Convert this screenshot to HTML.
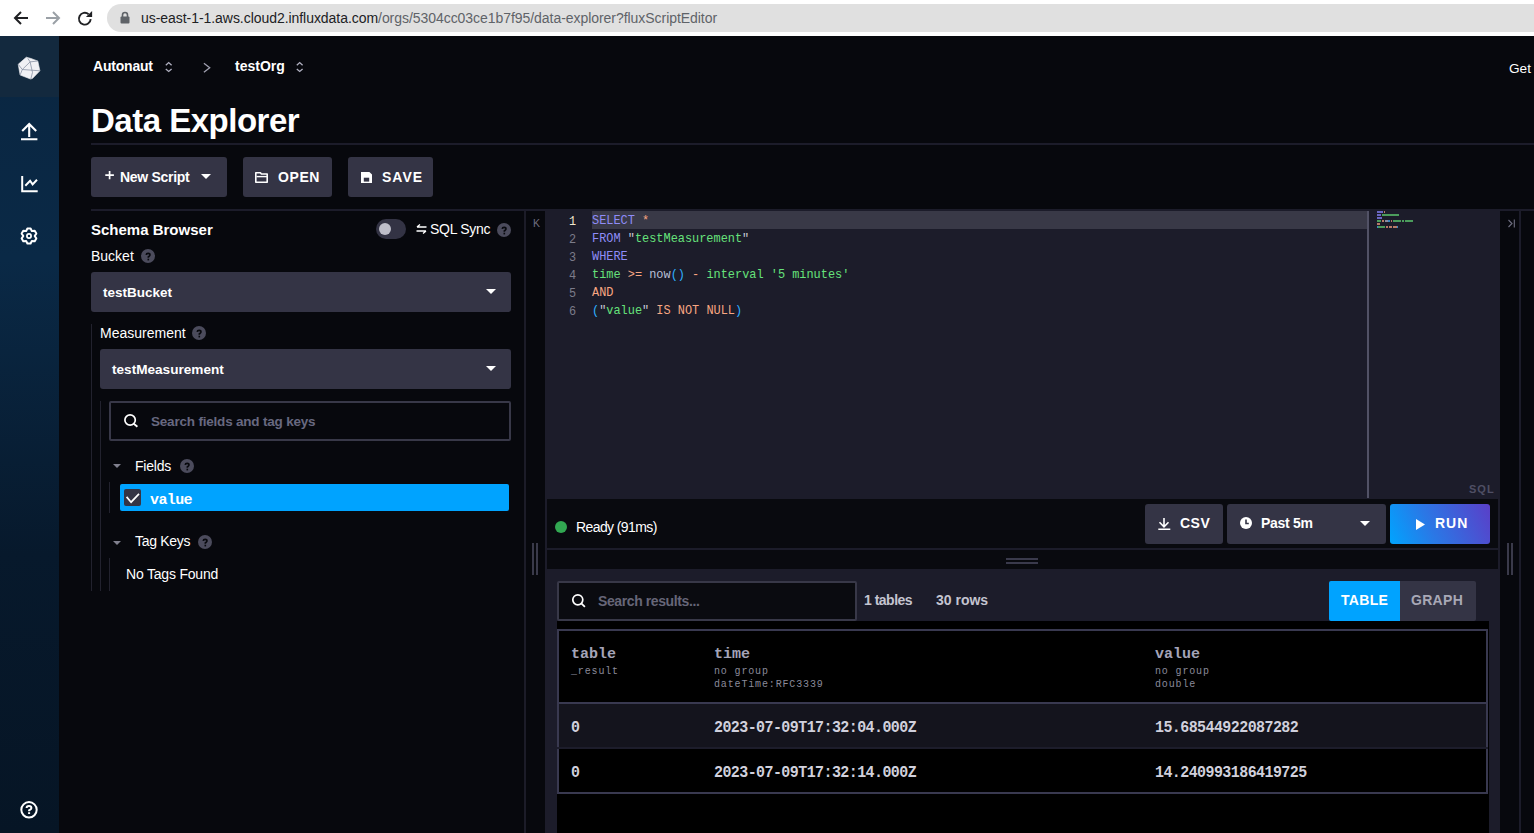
<!DOCTYPE html>
<html><head><meta charset="utf-8">
<style>
*{margin:0;padding:0;box-sizing:border-box}
html,body{width:1534px;height:833px;overflow:hidden;background:#07080d;font-family:"Liberation Sans",sans-serif;color:#fff}
.a{position:absolute;white-space:nowrap}
.mono{font-family:"Liberation Mono",monospace}
.btn{position:absolute;background:#343445;border-radius:3px}
.q{position:absolute;width:14px;height:14px;border-radius:50%;background:#4b4b5c;color:#07080d;font-size:10px;font-weight:bold;text-align:center;line-height:15px}
svg{position:absolute;overflow:visible}
.code{position:absolute;left:592px;font-family:"Liberation Mono",monospace;font-size:11.92px;white-space:pre;line-height:18px;padding-top:1px}
.ln{position:absolute;left:545px;width:31px;text-align:right;font-family:"Liberation Mono",monospace;font-size:11.85px;line-height:18px;color:#7c7c8a;padding-top:2px}
.kw{color:#8f8cf8}.st{color:#66e27b}.op{color:#f8a682}.fn{color:#b9bfd6}.pa{color:#2fb0ff}.wh{color:#c9c9d6}
</style></head><body>
<!-- browser bar -->
<div class="a" style="left:0;top:0;width:1534px;height:36px;background:#fff"></div>
<div class="a" style="left:107px;top:4px;width:1440px;height:28px;background:#e0e0e0;border-radius:14px"></div>
<svg style="left:13px;top:10px" width="16" height="16" viewBox="0 0 16 16"><path d="M15 8H2M8 2L2 8l6 6" stroke="#202124" stroke-width="2" fill="none"/></svg>
<svg style="left:45px;top:10px" width="16" height="16" viewBox="0 0 16 16"><path d="M1 8h13M8 2l6 6-6 6" stroke="#9aa0a6" stroke-width="2" fill="none"/></svg>
<svg style="left:77px;top:10px" width="16" height="16" viewBox="0 0 16 16"><path d="M13.7 9.2A5.9 5.9 0 1 1 11.6 4.2" stroke="#202124" stroke-width="1.9" fill="none"/><path d="M8.9 7.1L15.1 1.1V7.1z" fill="#202124"/></svg>
<svg style="left:120px;top:11px" width="10" height="13" viewBox="0 0 10 13"><rect x="0.5" y="5.5" width="9" height="7" rx="1" fill="#5f6368"/><path d="M2.5 6V4a2.5 2.5 0 0 1 5 0v2" stroke="#5f6368" stroke-width="1.6" fill="none"/></svg>
<div class="a" style="left:141px;top:10px;font-size:14px;letter-spacing:-0.05px;color:#202124">us-east-1-1.aws.cloud2.influxdata.com<span style="color:#5f6368">/orgs/5304cc03ce1b7f95/data-explorer?fluxScriptEditor</span></div>

<!-- sidebar -->
<div class="a" style="left:0;top:36px;width:59px;height:797px;background:linear-gradient(#0a2641 0%,#0a2946 28%,#07192c 65%,#061525 100%)"></div>
<div class="a" style="left:0;top:36px;width:59px;height:61px;background:#13293e"></div>
<svg style="left:14px;top:52px" width="30" height="32" viewBox="0 0 30 32"><path d="M4.2 12.3L12.3 5.2 16 6.2 23.8 9 25.9 18.8 18.4 26.5 16.5 27 6.1 23z" fill="#f0f0f4" stroke="#f0f0f4" stroke-width="0.6" stroke-linejoin="round"/><path d="M4.2 12.3L8.3 17.5 16.1 9.9 13.8 6.3M16.1 9.9L23.8 9M8.3 17.5L6.1 23M8.3 17.5L25.9 18.8M16.1 9.9L18.5 20.4 16.8 27" stroke="#7a8498" stroke-width="0.7" fill="none"/></svg>
<svg style="left:21px;top:123px" width="17" height="18" viewBox="0 0 17 18"><path d="M8.2 14V1.5M1.2 8l7-7 7 7M0 16.3h16.4" stroke="#fff" stroke-width="2.1" fill="none"/></svg>
<svg style="left:21px;top:176px" width="17" height="17" viewBox="0 0 17 17"><path d="M1.2 0v15.2h15.5M4.3 9.8l4.8-5 2.5 3.6 4.4-4.7" stroke="#fff" stroke-width="2" fill="none"/></svg>
<svg style="left:20px;top:227px" width="18" height="18" viewBox="0 0 18 18"><path d="M7.40 1.47 L10.60 1.47 L11.85 4.06 L14.72 3.85 L16.32 6.62 L14.70 9.00 L16.32 11.38 L14.72 14.15 L11.85 13.94 L10.60 16.53 L7.40 16.53 L6.15 13.94 L3.28 14.15 L1.68 11.38 L3.30 9.00 L1.68 6.62 L3.28 3.85 L6.15 4.06Z" stroke="#fff" stroke-width="2" fill="none" stroke-linejoin="round"/><circle cx="9" cy="9" r="2.1" stroke="#fff" stroke-width="1.7" fill="none"/></svg>
<svg style="left:20px;top:801px" width="18" height="18" viewBox="0 0 18 18"><circle cx="9" cy="8.8" r="7.7" stroke="#fff" stroke-width="2" fill="none"/><path d="M6.6 7.1C6.6 5.6 7.6 4.9 9 4.9 10.5 4.9 11.4 5.8 11.4 7 11.4 8.3 10.1 8.6 9.1 9.3V10.2" stroke="#fff" stroke-width="2" fill="none"/><rect x="8.1" y="11.2" width="2" height="1.8" fill="#fff"/></svg>

<!-- header -->
<div class="a" style="left:93px;top:58px;font-size:14px;font-weight:bold;letter-spacing:-0.2px">Autonaut</div>
<svg style="left:165px;top:61px" width="8" height="12" viewBox="0 0 8 12"><path d="M0.8 4.3l2.9-2.7 2.9 2.7M0.8 7.9l2.9 2.6 2.9-2.6" stroke="#b0b0c0" stroke-width="1.3" fill="none"/></svg>
<svg style="left:203px;top:62px" width="8" height="11" viewBox="0 0 8 11"><path d="M0.9 1.2l5.8 4.5-5.8 4.5" stroke="#a0a0b0" stroke-width="1.3" fill="none"/></svg>
<div class="a" style="left:235px;top:58px;font-size:14px;font-weight:bold">testOrg</div>
<svg style="left:296px;top:61px" width="8" height="12" viewBox="0 0 8 12"><path d="M0.8 4.3l2.9-2.7 2.9 2.7M0.8 7.9l2.9 2.6 2.9-2.6" stroke="#b0b0c0" stroke-width="1.3" fill="none"/></svg>
<div class="a" style="left:1509px;top:60.5px;font-size:13.6px">Get</div>
<div class="a" style="left:91px;top:102px;font-size:33px;font-weight:bold;letter-spacing:-0.5px">Data Explorer</div>
<div class="a" style="left:91px;top:143px;width:1443px;height:2px;background:#1c1c2a"></div>

<div class="btn" style="left:91px;top:157px;width:136px;height:40px"></div>
<div class="btn" style="left:243px;top:157px;width:89px;height:40px"></div>
<div class="btn" style="left:348px;top:157px;width:85px;height:40px"></div>
<svg style="left:105px;top:171px" width="9" height="9" viewBox="0 0 9 9"><path d="M4.6 0v8.2M0.3 4.1h8.6" stroke="#fff" stroke-width="1.7"/></svg>
<div class="a" style="left:120px;top:169px;font-size:14px;font-weight:bold;letter-spacing:-0.3px">New Script</div>
<svg style="left:201px;top:174px" width="10" height="5" viewBox="0 0 10 5"><path d="M0 0h10L5 5z" fill="#fff"/></svg>
<svg style="left:255px;top:172px" width="13" height="11" viewBox="0 0 13 11"><path d="M0.8 0.8h4.6l1 1.2h5.8v8.2H0.8z" stroke="#fff" stroke-width="1.6" fill="none" stroke-linejoin="round"/><path d="M1.5 4.6h11" stroke="#fff" stroke-width="1.4"/></svg>
<div class="a" style="left:278px;top:169px;font-size:14px;font-weight:bold;letter-spacing:0.6px">OPEN</div>
<svg style="left:361px;top:172px" width="11" height="11" viewBox="0 0 11 11"><path d="M0 0h8.4l2.6 2.6v8.4H0z" fill="#fff"/><rect x="2.8" y="5.7" width="5.4" height="3.9" fill="#343445"/></svg>
<div class="a" style="left:382px;top:169px;font-size:14px;font-weight:bold;letter-spacing:1px">SAVE</div>

<div class="a" style="left:91px;top:209px;width:1443px;height:2px;background:#1c1c2a"></div>

<!-- schema browser -->
<div class="a" style="left:91px;top:221px;font-size:15px;font-weight:bold">Schema Browser</div>
<div class="a" style="left:376px;top:219px;width:30px;height:20px;border-radius:10px;background:#333344"></div>
<div class="a" style="left:379px;top:223px;width:12px;height:12px;border-radius:50%;background:#bebec9"></div>
<svg style="left:416px;top:224px" width="11" height="10" viewBox="0 0 11 10"><path d="M10.5 3H1M4 0.5L1 3M0.5 7H10M7 9.5L10 7" stroke="#fff" stroke-width="1.4" fill="none"/></svg>
<div class="a" style="left:430px;top:221px;font-size:14px;letter-spacing:-0.3px">SQL Sync</div>
<svg style="left:497px;top:223px" width="14" height="14" viewBox="0 0 14 14"><circle cx="7" cy="7" r="7" fill="#4b4b5c"/><path d="M5.2 5.9C5.3 4.9 6 4.4 7.1 4.4 8.2 4.4 9 5.1 9 6 9 7 8 7.3 7.3 7.9V8.8" stroke="#07080d" stroke-width="1.6" fill="none"/><rect x="6.5" y="9.7" width="1.6" height="1.7" fill="#07080d"/></svg>
<div class="a" style="left:91px;top:248px;font-size:14px">Bucket</div>
<svg style="left:141px;top:249px" width="14" height="14" viewBox="0 0 14 14"><circle cx="7" cy="7" r="7" fill="#4b4b5c"/><path d="M5.2 5.9C5.3 4.9 6 4.4 7.1 4.4 8.2 4.4 9 5.1 9 6 9 7 8 7.3 7.3 7.9V8.8" stroke="#07080d" stroke-width="1.6" fill="none"/><rect x="6.5" y="9.7" width="1.6" height="1.7" fill="#07080d"/></svg>
<div class="btn" style="left:91px;top:272px;width:420px;height:40px"></div>
<div class="a" style="left:103px;top:285px;font-size:13.5px;font-weight:bold">testBucket</div>
<svg style="left:486px;top:289px" width="10" height="5" viewBox="0 0 10 5"><path d="M0 0h10L5 5z" fill="#fff"/></svg>
<div class="a" style="left:91px;top:324px;width:1px;height:267px;background:#22222e"></div>
<div class="a" style="left:100px;top:325px;font-size:14px">Measurement</div>
<svg style="left:192px;top:326px" width="14" height="14" viewBox="0 0 14 14"><circle cx="7" cy="7" r="7" fill="#4b4b5c"/><path d="M5.2 5.9C5.3 4.9 6 4.4 7.1 4.4 8.2 4.4 9 5.1 9 6 9 7 8 7.3 7.3 7.9V8.8" stroke="#07080d" stroke-width="1.6" fill="none"/><rect x="6.5" y="9.7" width="1.6" height="1.7" fill="#07080d"/></svg>
<div class="btn" style="left:100px;top:349px;width:411px;height:40px"></div>
<div class="a" style="left:112px;top:362px;font-size:13.6px;font-weight:bold">testMeasurement</div>
<svg style="left:486px;top:366px" width="10" height="5" viewBox="0 0 10 5"><path d="M0 0h10L5 5z" fill="#fff"/></svg>
<div class="a" style="left:100px;top:401px;width:1px;height:190px;background:#22222e"></div>
<div class="a" style="left:109px;top:401px;width:402px;height:40px;border:2px solid #383848;border-radius:2px;background:#07080d"></div>
<svg style="left:124px;top:414px" width="15" height="15" viewBox="0 0 15 15"><circle cx="6.1" cy="6" r="5.2" stroke="#fff" stroke-width="1.7" fill="none"/><path d="M9.8 9.7L13.4 12.8" stroke="#fff" stroke-width="1.8"/></svg>
<div class="a" style="left:151px;top:414px;font-size:13.5px;font-weight:bold;letter-spacing:-0.2px;color:#686880">Search fields and tag keys</div>
<svg style="left:113px;top:464px" width="8" height="4" viewBox="0 0 8 4"><path d="M0 0h8L4 4z" fill="#80808e"/></svg>
<div class="a" style="left:135px;top:458px;font-size:14px;letter-spacing:-0.2px">Fields</div>
<svg style="left:180px;top:459px" width="14" height="14" viewBox="0 0 14 14"><circle cx="7" cy="7" r="7" fill="#4b4b5c"/><path d="M5.2 5.9C5.3 4.9 6 4.4 7.1 4.4 8.2 4.4 9 5.1 9 6 9 7 8 7.3 7.3 7.9V8.8" stroke="#07080d" stroke-width="1.6" fill="none"/><rect x="6.5" y="9.7" width="1.6" height="1.7" fill="#07080d"/></svg>
<div class="a" style="left:109px;top:482px;width:1px;height:31px;background:#22222e"></div>
<div class="a" style="left:120px;top:484px;width:389px;height:27px;border-radius:2px;background:#00a3ff"></div>
<div class="a" style="left:124px;top:489px;width:17px;height:17px;border-radius:2px;background:#353545"></div>
<svg style="left:124px;top:489px" width="17" height="17" viewBox="0 0 17 17"><path d="M2.6 7.9l4.5 5.3 7.9-8.3" stroke="#fff" stroke-width="1.7" fill="none"/></svg>
<div class="a mono" style="left:150px;top:492px;font-size:15px;letter-spacing:-0.6px;font-weight:bold">value</div>
<svg style="left:113px;top:541px" width="8" height="4" viewBox="0 0 8 4"><path d="M0 0h8L4 4z" fill="#80808e"/></svg>
<div class="a" style="left:135px;top:533px;font-size:14px;letter-spacing:-0.3px">Tag Keys</div>
<svg style="left:198px;top:535px" width="14" height="14" viewBox="0 0 14 14"><circle cx="7" cy="7" r="7" fill="#4b4b5c"/><path d="M5.2 5.9C5.3 4.9 6 4.4 7.1 4.4 8.2 4.4 9 5.1 9 6 9 7 8 7.3 7.3 7.9V8.8" stroke="#07080d" stroke-width="1.6" fill="none"/><rect x="6.5" y="9.7" width="1.6" height="1.7" fill="#07080d"/></svg>
<div class="a" style="left:109px;top:558px;width:1px;height:33px;background:#22222e"></div>
<div class="a" style="left:126px;top:566px;font-size:14px;letter-spacing:-0.2px">No Tags Found</div>

<div class="a" style="left:524px;top:211px;width:2px;height:622px;background:#1c1c28"></div>
<div class="a" style="left:532px;top:543px;width:2px;height:32px;background:#3a3a4a"></div>
<div class="a" style="left:536px;top:543px;width:2px;height:32px;background:#3a3a4a"></div>
<div class="a" style="left:533px;top:217px;font-size:10.5px;color:#6e6e80">K</div>

<!-- editor -->
<div class="a" style="left:545px;top:211px;width:955px;height:622px;background:#1c1c2a"></div>
<div class="a" style="left:592px;top:211px;width:776px;height:18px;background:#393947"></div>
<div class="a" style="left:1367px;top:211px;width:2px;height:287px;background:#525266"></div>
<div class="ln" style="top:211px;color:#f0e6cc">1</div>
<div class="ln" style="top:229px">2</div>
<div class="ln" style="top:247px">3</div>
<div class="ln" style="top:265px">4</div>
<div class="ln" style="top:283px">5</div>
<div class="ln" style="top:301px">6</div>
<div class="code" style="top:211px"><span class="kw">SELECT</span> <span class="op">*</span></div>
<div class="code" style="top:229px"><span class="kw">FROM</span> <span class="wh">"</span><span class="st">testMeasurement</span><span class="wh">"</span></div>
<div class="code" style="top:247px"><span class="kw">WHERE</span></div>
<div class="code" style="top:265px"><span class="st">time</span> <span class="op">&gt;=</span> <span class="fn">now</span><span class="pa">()</span> <span class="op">-</span> <span class="st">interval</span> <span class="st">'5 minutes'</span></div>
<div class="code" style="top:283px"><span class="op">AND</span></div>
<div class="code" style="top:301px"><span class="pa">(</span><span class="wh">"</span><span class="st">value</span><span class="wh">"</span> <span class="op">IS</span> <span class="op">NOT</span> <span class="op">NULL</span><span class="pa">)</span></div>
<div class="a" style="left:1377px;top:211px;width:6px;height:2px;background:#6a67c4"></div>
<div class="a" style="left:1384px;top:211px;width:1px;height:2px;background:#b87a68"></div>
<div class="a" style="left:1377px;top:214px;width:4px;height:2px;background:#6a67c4"></div>
<div class="a" style="left:1382px;top:214px;width:17px;height:2px;background:#4b9c5c"></div>
<div class="a" style="left:1377px;top:217px;width:5px;height:2px;background:#6a67c4"></div>
<div class="a" style="left:1377px;top:220px;width:4px;height:2px;background:#4b9c5c"></div>
<div class="a" style="left:1382px;top:220px;width:2px;height:2px;background:#b87a68"></div>
<div class="a" style="left:1385px;top:220px;width:3px;height:2px;background:#8a8ca0"></div>
<div class="a" style="left:1388px;top:220px;width:2px;height:2px;background:#3a86c0"></div>
<div class="a" style="left:1391px;top:220px;width:1px;height:2px;background:#b87a68"></div>
<div class="a" style="left:1393px;top:220px;width:8px;height:2px;background:#4b9c5c"></div>
<div class="a" style="left:1402px;top:220px;width:2px;height:2px;background:#4b9c5c"></div>
<div class="a" style="left:1405px;top:220px;width:8px;height:2px;background:#4b9c5c"></div>
<div class="a" style="left:1377px;top:223px;width:3px;height:2px;background:#b87a68"></div>
<div class="a" style="left:1377px;top:226px;width:1px;height:2px;background:#3a86c0"></div>
<div class="a" style="left:1378px;top:226px;width:7px;height:2px;background:#4b9c5c"></div>
<div class="a" style="left:1386px;top:226px;width:2px;height:2px;background:#b87a68"></div>
<div class="a" style="left:1389px;top:226px;width:3px;height:2px;background:#b87a68"></div>
<div class="a" style="left:1393px;top:226px;width:4px;height:2px;background:#b87a68"></div>
<div class="a" style="left:1397px;top:226px;width:1px;height:2px;background:#3a86c0"></div>
<div class="a" style="left:1469px;top:483px;font-size:11px;font-weight:bold;color:#4f4f64;letter-spacing:1px">SQL</div>
<!-- right collapse column -->
<div class="a" style="left:1500px;top:211px;width:20px;height:622px;background:#07080d"></div>
<div class="a" style="left:1519px;top:211px;width:2px;height:622px;background:#1c1c2a"></div>
<svg style="left:1508px;top:219px" width="7" height="9" viewBox="0 0 7 9"><path d="M0.5 1l3.5 3.5-3.5 3.5M6.3 0.5v8" stroke="#6e6e80" stroke-width="1.1" fill="none"/></svg>
<div class="a" style="left:1507px;top:543px;width:2px;height:32px;background:#3a3a4a"></div>
<div class="a" style="left:1511px;top:543px;width:2px;height:32px;background:#3a3a4a"></div>

<!-- status bar -->
<div class="a" style="left:547px;top:499px;width:951px;height:49px;background:#090a0f"></div>
<div class="a" style="left:547px;top:550px;width:951px;height:19px;background:#090a0f"></div>
<div class="a" style="left:1006px;top:558px;width:32px;height:2px;background:#3a3a4c"></div>
<div class="a" style="left:1006px;top:562px;width:32px;height:2px;background:#3a3a4c"></div>
<div class="a" style="left:555px;top:521px;width:12px;height:12px;border-radius:50%;background:#32a852"></div>
<div class="a" style="left:576px;top:519px;font-size:14px;letter-spacing:-0.6px">Ready (91ms)</div>
<div class="btn" style="left:1145px;top:504px;width:78px;height:40px"></div>
<svg style="left:1158px;top:517px" width="13" height="14" viewBox="0 0 13 14"><path d="M6 1v9M1.5 5.3l4.5 4.5 4.5-4.5M0.3 12.2h12" stroke="#fff" stroke-width="1.6" fill="none"/></svg>
<div class="a" style="left:1180px;top:515px;font-size:14px;font-weight:bold;letter-spacing:0.5px">CSV</div>
<div class="btn" style="left:1227px;top:504px;width:159px;height:40px"></div>
<svg style="left:1240px;top:517px" width="12" height="12" viewBox="0 0 12 12"><circle cx="6" cy="6" r="6" fill="#fff"/><path d="M6 2.5V6.5H8.8" stroke="#343445" stroke-width="1.6" fill="none"/></svg>
<div class="a" style="left:1261px;top:515px;font-size:14px;font-weight:bold;letter-spacing:-0.3px">Past 5m</div>
<svg style="left:1360px;top:521px" width="10" height="5" viewBox="0 0 10 5"><path d="M0 0h10L5 5z" fill="#fff"/></svg>
<div class="a" style="left:1390px;top:504px;width:100px;height:40px;border-radius:3px;background:linear-gradient(66deg,#00a4ff 0%,#2a78e6 40%,#5a3fc8 100%)"></div>
<svg style="left:1416px;top:518.5px" width="9" height="11" viewBox="0 0 9 11"><path d="M0 0l9 5.5L0 11z" fill="#fff"/></svg>
<div class="a" style="left:1435px;top:515px;font-size:14px;font-weight:bold;letter-spacing:1px">RUN</div>

<!-- results -->
<div class="a" style="left:557px;top:581px;width:300px;height:40px;border:2px solid #383848;border-radius:2px;background:#0a0b10"></div>
<svg style="left:572px;top:594px" width="15" height="15" viewBox="0 0 15 15"><circle cx="5.8" cy="5.8" r="5" stroke="#fff" stroke-width="1.7" fill="none"/><path d="M9.3 9.3L12.9 12.8" stroke="#fff" stroke-width="1.8"/></svg>
<div class="a" style="left:598px;top:593px;font-size:14px;font-weight:bold;letter-spacing:-0.4px;color:#666678">Search results...</div>
<div class="a" style="left:864px;top:592px;font-size:14px;font-weight:bold;letter-spacing:-0.5px;color:#c4c4d0">1 tables</div>
<div class="a" style="left:936px;top:592px;font-size:14px;font-weight:bold;color:#c4c4d0">30 rows</div>
<div class="a" style="left:1329px;top:581px;width:71px;height:40px;background:#00a3ff;border-radius:2px 0 0 2px"></div>
<div class="a" style="left:1400px;top:581px;width:76px;height:40px;background:#343445;border-radius:0 2px 2px 0"></div>
<div class="a" style="left:1341px;top:592px;font-size:14px;font-weight:bold;letter-spacing:0.3px">TABLE</div>
<div class="a" style="left:1411px;top:592px;font-size:14px;font-weight:bold;letter-spacing:0.3px;color:#a8a8b6">GRAPH</div>

<div class="a" style="left:557px;top:621px;width:932px;height:212px;background:#000"></div>
<div class="a" style="left:557px;top:629px;width:931px;height:165px;border:2px solid #393950"></div>
<div class="a" style="left:559px;top:702px;width:927px;height:2px;background:#393950"></div>
<div class="a" style="left:559px;top:704px;width:927px;height:43px;background:#14141d"></div>
<div class="a" style="left:557px;top:747px;width:931px;height:2px;background:#1d1d2b"></div>
<div class="a mono" style="left:571px;top:646px;font-size:15px;font-weight:bold;color:#a4a4b8">table</div>
<div class="a mono" style="left:714px;top:646px;font-size:15px;font-weight:bold;color:#a4a4b8">time</div>
<div class="a mono" style="left:1155px;top:646px;font-size:15px;font-weight:bold;color:#a4a4b8">value</div>
<div class="a mono" style="left:571px;top:665px;font-size:10px;letter-spacing:0.85px;color:#8a8a9a;line-height:13px">_result</div>
<div class="a mono" style="left:714px;top:665px;font-size:10px;letter-spacing:0.85px;color:#8a8a9a;line-height:13px">no group<br>dateTime:RFC3339</div>
<div class="a mono" style="left:1155px;top:665px;font-size:10px;letter-spacing:0.85px;color:#8a8a9a;line-height:13px">no group<br>double</div>
<div class="a mono" style="left:571px;top:719.7px;font-size:15px;letter-spacing:-0.58px;font-weight:bold;color:#d0d0dc;transform:scaleY(1.13);transform-origin:0 55%">0</div>
<div class="a mono" style="left:714px;top:719.7px;font-size:15px;letter-spacing:-0.58px;font-weight:bold;color:#d0d0dc;transform:scaleY(1.13);transform-origin:0 55%">2023-07-09T17:32:04.000Z</div>
<div class="a mono" style="left:1155px;top:719.7px;font-size:15px;letter-spacing:-0.58px;font-weight:bold;color:#d0d0dc;transform:scaleY(1.13);transform-origin:0 55%">15.68544922087282</div>
<div class="a mono" style="left:571px;top:764.7px;font-size:15px;letter-spacing:-0.58px;font-weight:bold;color:#d0d0dc;transform:scaleY(1.13);transform-origin:0 55%">0</div>
<div class="a mono" style="left:714px;top:764.7px;font-size:15px;letter-spacing:-0.58px;font-weight:bold;color:#d0d0dc;transform:scaleY(1.13);transform-origin:0 55%">2023-07-09T17:32:14.000Z</div>
<div class="a mono" style="left:1155px;top:764.7px;font-size:15px;letter-spacing:-0.58px;font-weight:bold;color:#d0d0dc;transform:scaleY(1.13);transform-origin:0 55%">14.240993186419725</div>
</body></html>
